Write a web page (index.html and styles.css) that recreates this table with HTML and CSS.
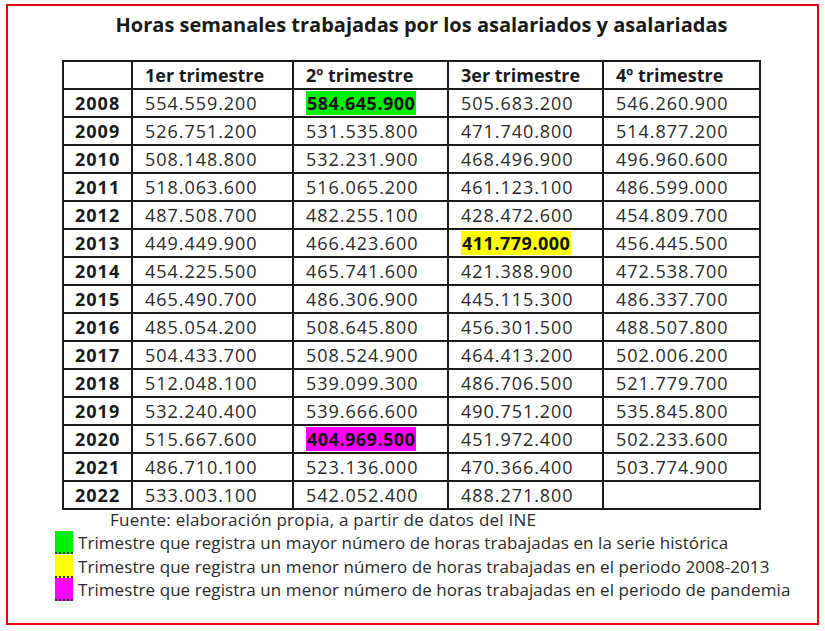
FILE: index.html
```html
<!DOCTYPE html>
<html lang="es">
<head>
<meta charset="utf-8">
<link rel="stylesheet" href="styles.css">
</head>
<body>
<div class="frame">
  <h1 class="title">Horas semanales trabajadas por los asalariados y asalariadas</h1>
  <table class="data">
    <colgroup>
      <col class="c-year"><col class="c-q"><col class="c-q2"><col class="c-q2"><col class="c-q4">
    </colgroup>
    <thead>
      <tr><th></th><th>1er trimestre</th><th>2º trimestre</th><th>3er trimestre</th><th>4º trimestre</th></tr>
    </thead>
    <tbody>
      <tr><th>2008</th><td>554.559.200</td><td><span class="hl hl-green">584.645.900</span></td><td>505.683.200</td><td>546.260.900</td></tr>
      <tr><th>2009</th><td>526.751.200</td><td>531.535.800</td><td>471.740.800</td><td>514.877.200</td></tr>
      <tr><th>2010</th><td>508.148.800</td><td>532.231.900</td><td>468.496.900</td><td>496.960.600</td></tr>
      <tr><th>2011</th><td>518.063.600</td><td>516.065.200</td><td>461.123.100</td><td>486.599.000</td></tr>
      <tr><th>2012</th><td>487.508.700</td><td>482.255.100</td><td>428.472.600</td><td>454.809.700</td></tr>
      <tr><th>2013</th><td>449.449.900</td><td>466.423.600</td><td><span class="hl hl-yellow">411.779.000</span></td><td>456.445.500</td></tr>
      <tr><th>2014</th><td>454.225.500</td><td>465.741.600</td><td>421.388.900</td><td>472.538.700</td></tr>
      <tr><th>2015</th><td>465.490.700</td><td>486.306.900</td><td>445.115.300</td><td>486.337.700</td></tr>
      <tr><th>2016</th><td>485.054.200</td><td>508.645.800</td><td>456.301.500</td><td>488.507.800</td></tr>
      <tr><th>2017</th><td>504.433.700</td><td>508.524.900</td><td>464.413.200</td><td>502.006.200</td></tr>
      <tr><th>2018</th><td>512.048.100</td><td>539.099.300</td><td>486.706.500</td><td>521.779.700</td></tr>
      <tr><th>2019</th><td>532.240.400</td><td>539.666.600</td><td>490.751.200</td><td>535.845.800</td></tr>
      <tr><th>2020</th><td>515.667.600</td><td><span class="hl hl-magenta">404.969.500</span></td><td>451.972.400</td><td>502.233.600</td></tr>
      <tr><th>2021</th><td>486.710.100</td><td>523.136.000</td><td>470.366.400</td><td>503.774.900</td></tr>
      <tr><th>2022</th><td>533.003.100</td><td>542.052.400</td><td>488.271.800</td><td></td></tr>
    </tbody>
  </table>
  <p class="source">Fuente: elaboración propia, a partir de datos del INE</p>
  <ul class="legend">
    <li><span class="swatch sw-green"></span>Trimestre que registra un mayor número de horas trabajadas en la serie histórica</li>
    <li><span class="swatch sw-yellow"></span>Trimestre que registra un menor número de horas trabajadas en el periodo 2008-2013</li>
    <li><span class="swatch sw-magenta"></span>Trimestre que registra un menor número de horas trabajadas en el periodo de pandemia</li>
  </ul>
</div>
</body>
</html>
```

FILE: styles.css
```css
html, body {
  margin: 0;
  padding: 0;
  background: #fff;
}
body {
  font-family: "Open Sans", "Liberation Sans", sans-serif;
  color: #1a1a1a;
}
.frame {
  box-sizing: border-box;
  margin: 4px 0 0 6px;
  width: 813px;
  height: 621px;
  border: 2px solid #e3000f;
  padding: 0;
}
.title {
  margin: 0;
  padding: 5px 0 0 18px;
  height: 29px;
  text-align: center;
  font-size: 20px;
  font-weight: 700;
  line-height: 28px;
  color: #1a1a1a;
}
.data {
  margin: 20px 0 0 54px;
  border-collapse: collapse;
  table-layout: fixed;
  width: 698px;
  font-size: 18px;
}
.c-year { width: 69px; }
.c-q { width: 161px; }
.c-q2 { width: 155px; }
.c-q4 { width: 157px; }
.data th, .data td {
  border: 2px solid #1c1c1c;
  height: 26px;
  padding: 0 0 0 12px;
  text-align: left;
  line-height: 26px;
  white-space: nowrap;
}
.data th { font-weight: 700; }
.data tbody th { letter-spacing: 1px; padding-left: 11px; }
.data td { font-weight: 400; color: #2a2a2a; letter-spacing: 0.95px; }
.hl {
  display: inline-block;
  font-weight: 700;
  color: #111;
  padding: 0 1px;
  line-height: 24px;
  letter-spacing: 0.5px;
}
.hl-green { background: #00f000; }
.hl-yellow { background: #ffff00; }
.hl-magenta { background: #ff00ff; }
.source {
  margin: -2px 0 0 102px;
  font-size: 17px;
  line-height: 23px;
  letter-spacing: 0.25px;
  color: #2a2a2a;
}
.legend {
  list-style: none;
  margin: 0 0 0 47px;
  padding: 0;
  font-size: 17px;
  line-height: 23.5px;
  letter-spacing: 0.07px;
  color: #2a2a2a;
}
.legend li {
  display: flex;
  align-items: center;
  gap: 5px;
}
.swatch {
  width: 18px;
  height: 23px;
  box-sizing: border-box;
  border-bottom: 2px dotted #333;
}
.sw-green { background: #00f000; }
.sw-yellow { background: #ffff00; }
.sw-magenta { background: #ff00ff; }
```
